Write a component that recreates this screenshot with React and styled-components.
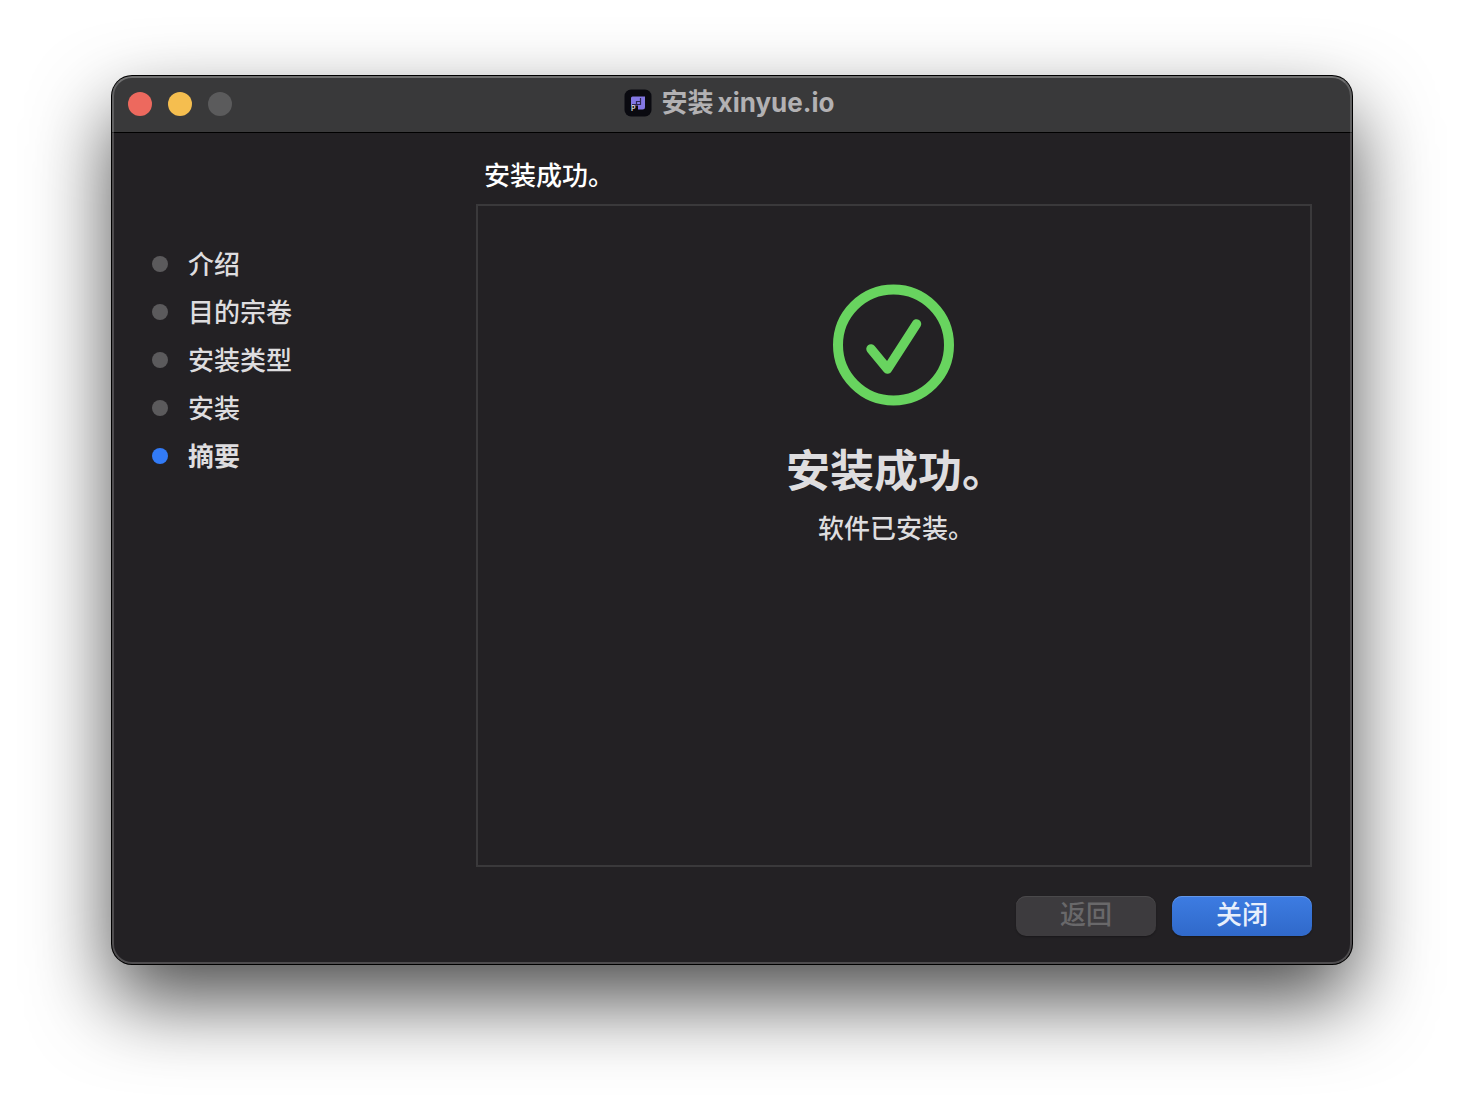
import React from "react";
import styled, { createGlobalStyle } from "styled-components";

const GlobalStyle = createGlobalStyle`
  * { box-sizing: border-box; }
  body {
    margin: 0;
    background: #fff;
    color: #dedddf;
    font-family: Inter, "Noto Sans CJK SC", sans-serif;
    font-size: 26px;
    line-height: 40px;
    font-weight: 500;
  }
  h1, h2, p, ol { margin: 0; padding: 0; }
  button { font: inherit; border: 0; padding: 0; }
`;

const Desktop = styled.main`
  display: flex;
  min-height: 100vh;
  padding: 76px 112px 148px;
`;

const Window = styled.section`
  position: relative;
  flex: 1;
  display: flex;
  flex-direction: column;
  overflow: hidden;
  border-radius: 20px;
  background: #232124;
  box-shadow: 0 0 0 1px #000, 0 36px 80px rgba(0, 0, 0, 0.7);

  &::after {
    content: "";
    position: absolute;
    inset: 0;
    border: 2px solid rgba(255, 255, 255, 0.2);
    border-top-color: rgba(255, 255, 255, 0.28);
    border-radius: 20px;
    pointer-events: none;
  }
`;

const TitleBar = styled.header`
  display: grid;
  grid-template-columns: 1fr auto 1fr;
  align-items: center;
  height: 57px;
  padding: 0 22px 0 16px;
  background: #39393a;
  border-bottom: 1px solid #000;
`;

const Lights = styled.div`
  display: flex;
  gap: 16px;
`;

const Light = styled.button`
  width: 24px;
  height: 24px;
  border-radius: 50%;
  background: ${(p) => p.$color};
`;

const Title = styled.h1`
  display: flex;
  align-items: center;
  gap: 10px;
  padding-bottom: 2px;
  color: #b2b1b3;
  font-size: 26px;
  font-weight: 700;
`;

const Name = styled.span`
  display: flex;
  gap: 4px;
`;

const Body = styled.div`
  flex: 1;
  display: flex;
  padding: 23px 40px 28px;
`;

const Sidebar = styled.nav`
  width: 324px;
  padding-top: 84px;
`;

const Steps = styled.ol`
  list-style: none;
`;

const Step = styled.li`
  display: flex;
  align-items: center;
  gap: 20px;
  height: 48px;
  font-weight: ${(p) => (p.$active ? 700 : 500)};

  &::before {
    content: "";
    width: 16px;
    height: 16px;
    border-radius: 50%;
    background: ${(p) => (p.$active ? "#327bf7" : "#5b5a5c")};
  }
`;

const StepLabel = styled.span`
  padding-top: 2px;
`;

const Content = styled.div`
  flex: 1;
  display: flex;
  flex-direction: column;
`;

const Heading = styled.h2`
  padding: 0 8px;
  margin-bottom: 8px;
  color: #fff;
  font-size: 26px;
  font-weight: 500;
`;

const Panel = styled.div`
  flex: 1;
  display: flex;
  flex-direction: column;
  align-items: center;
  padding-top: 78px;
  border: 2px solid #3a393b;
`;

const Message = styled.div`
  margin-top: 33px;
  padding-left: 4px;
  text-align: center;
`;

const Result = styled.p`
  font-size: 44px;
  line-height: 64px;
  font-weight: 700;
`;

const Detail = styled.p`
  margin-top: 6px;
`;

const Actions = styled.footer`
  display: flex;
  justify-content: flex-end;
  gap: 16px;
  margin-top: 29px;
`;

const Button = styled.button`
  width: 140px;
  height: 40px;
  padding-bottom: 2px;
  border-radius: 10px;
  line-height: 38px;
  color: ${(p) => (p.$primary ? "#e8effc" : "#69686a")};
  background: ${(p) => (p.$primary ? "linear-gradient(#3d7ce2, #3069ca)" : "#3d3b3e")};
  box-shadow: inset 0 1px ${(p) => (p.$primary ? "#6397e8" : "#4a494b")}, 0 1px 2px rgba(0, 0, 0, 0.3);
`;

const AppIcon = () => (
  <svg width="28" height="28" viewBox="0 0 28 28" aria-hidden="true">
    <rect x="0.5" y="0.5" width="27" height="27" rx="6.5" fill="#0a0a10" />
    <path d="M8.5 7.5H21V18q0 2.5-2.5 2.5H14v-4H7V9q0-1.5 1.500-1.500z" fill="#8377e4" />
    <path d="M16.500 9v6.500h-4v-3h4M12 15.500H8" fill="none" stroke="#2c2850" strokeWidth="1.200" />
    <text x="7" y="21.5" fontSize="7" fontWeight="700" fill="#cfcfcf">P</text>
  </svg>
);

const Check = () => (
  <svg width="122" height="122" viewBox="0 0 122 122" fill="none" stroke="#68d45f" aria-hidden="true">
    <circle cx="60.5" cy="61" r="55.5" strokeWidth="10" />
    <path d="M38 65l16.500 20L83.500 40" strokeWidth="9.500" strokeLinecap="round" strokeLinejoin="round" />
  </svg>
);

const steps = ["介绍", "目的宗卷", "安装类型", "安装", "摘要"];

export default function App() {
  return (
    <>
      <GlobalStyle />
      <Desktop lang="zh-CN">
        <Window>
          <TitleBar>
            <Lights>
              <Light $color="#ed695e" aria-label="关闭窗口" />
              <Light $color="#f5be4f" aria-label="最小化" />
              <Light $color="#5b5b5c" aria-label="缩放" disabled />
            </Lights>
            <Title>
              <AppIcon />
              <Name>
                <span>安装</span>
                <span>xinyue.io</span>
              </Name>
            </Title>
          </TitleBar>
          <Body>
            <Sidebar>
              <Steps>
                {steps.map((s, i) => (
                  <Step key={s} $active={i === steps.length - 1}>
                    <StepLabel>{s}</StepLabel>
                  </Step>
                ))}
              </Steps>
            </Sidebar>
            <Content>
              <Heading>安装成功。</Heading>
              <Panel>
                <Check />
                <Message>
                  <Result>安装成功。</Result>
                  <Detail>软件已安装。</Detail>
                </Message>
              </Panel>
              <Actions>
                <Button disabled>返回</Button>
                <Button $primary>关闭</Button>
              </Actions>
            </Content>
          </Body>
        </Window>
      </Desktop>
    </>
  );
}
